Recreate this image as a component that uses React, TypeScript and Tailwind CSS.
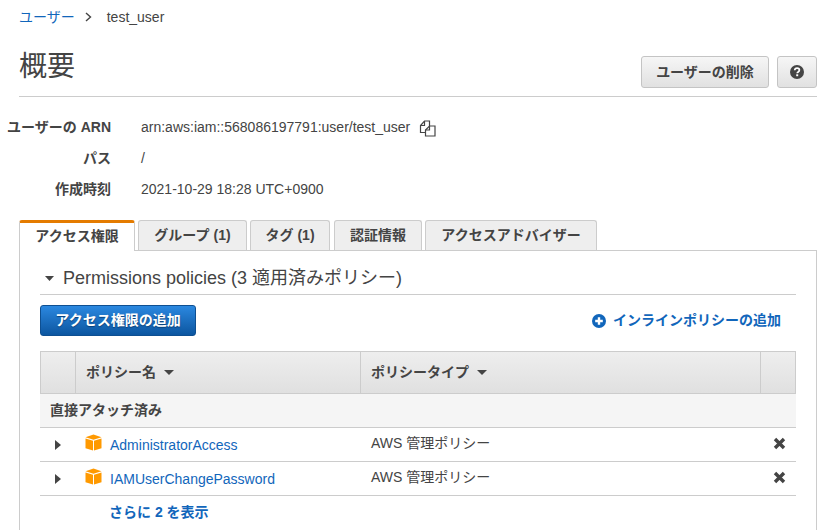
import React from "react";

const Caret = () => (
  <svg width="10" height="5" viewBox="0 0 10 5" className="inline-block"><path d="M0 0h10L5 5z" fill="#444" /></svg>
);

const Cube = () => (
  <svg width="17" height="17" viewBox="0 0 17 17" className="shrink-0">
    <path d="M8.5 0.5 16.5 3.2 8.5 5.8 0.5 3.2z" fill="#ff9900" />
    <path d="M0.5 4.4 8 6.8V16.5L0.5 14.2z" fill="#ff9900" />
    <path d="M16.5 4.4 9 6.8V16.5L16.5 14.2z" fill="#ff9900" />
  </svg>
);

const Row = ({ name }: { name: string }) => (
  <div className="flex h-[34px] items-center border-b border-[#cccccc] text-[14px]">
    <div className="flex w-[35px] shrink-0 justify-center pl-[1px]">
      <svg width="6" height="10" viewBox="0 0 6 10"><path d="M0 0l6 5-6 5z" fill="#444" /></svg>
    </div>
    <div className="flex w-[285px] shrink-0 items-center pl-[10px]">
      <span className="mt-[-5px]"><Cube /></span>
      <a className="ml-[8px] mt-[1px] text-[#1166bb]">{name}</a>
    </div>
    <div className="flex-1 pl-[11px] pb-[2px] text-[#444444]">AWS 管理ポリシー</div>
    <div className="flex w-[36px] shrink-0 justify-center pb-[2px] pl-[3px]">
      <svg width="13" height="13" viewBox="0 0 13 13"><path d="M2 2l9 9M11 2l-9 9" stroke="#444" strokeWidth="3.4" /></svg>
    </div>
  </div>
);

const Tab = ({ label, count, w }: { label: string; count?: string; w: string }) => (
  <div className={`flex h-[30px] items-center justify-center rounded-t-[3px] border border-b-0 border-[#cccccc] bg-[#eeeeee] pb-[1px] text-[14px] font-bold text-[#444444] ${w}`}>
    {label}{count && <span className="ml-[4px]">{count}</span>}
  </div>
);

export default function App() {
  return (
    <div className="h-[530px] w-[833px] overflow-hidden bg-white pl-[19px] pr-[16px] text-[14px] text-[#444444]" style={{ fontFamily: '"Liberation Sans", "Noto Sans CJK JP", sans-serif' }}>
      <div className="flex h-[34px] items-center pb-[1px] leading-none">
        <a className="text-[#1166bb]">ユーザー</a>
        <svg width="7" height="10" viewBox="0 0 7 10" className="ml-[10px] mr-[15px]"><path d="M1 1l4.5 4L1 9" fill="none" stroke="#444" strokeWidth="1.4" /></svg>
        <span>test_user</span>
      </div>

      <div className="flex h-[63px] justify-between border-b border-[#cccccc]">
        <h1 className="mt-[12px] text-[28px] leading-[42px] font-normal text-[#444444]">概要</h1>
        <div className="mt-[22px] flex gap-[8px]">
          <button className="flex h-[32px] w-[128px] items-center justify-center rounded-[3px] border border-[#c4c4c4] bg-gradient-to-b from-[#f6f6f6] to-[#e1e1e1] text-[14px] font-bold text-[#444444]">ユーザーの削除</button>
          <button className="flex h-[32px] w-[40px] items-center justify-center rounded-[3px] border border-[#c4c4c4] bg-gradient-to-b from-[#f6f6f6] to-[#e1e1e1]">
            <svg width="14" height="14" viewBox="0 0 14 14">
              <circle cx="7" cy="7" r="7" fill="#444" />
              <path d="M4.7 5.3C4.8 3.9 5.8 3.2 7.1 3.2c1.3 0 2.3.8 2.3 1.9 0 1.9-2.2 1.7-2.2 3.1" fill="none" stroke="#fff" strokeWidth="1.7" />
              <rect x="6.2" y="9.3" width="2" height="1.9" fill="#fff" />
            </svg>
          </button>
        </div>
      </div>

      <div className="ml-[-19px] mt-[20px] grid grid-cols-[111px_1fr] gap-x-[30px] gap-y-[10px] leading-[21px]">
        <div className="text-right font-bold">ユーザーの ARN</div>
        <div className="flex items-center">
          <span>arn:aws:iam::568086197791:user/test_user</span>
          <svg width="17" height="17" viewBox="0 0 17 17" className="ml-[9px] mt-[1px]" fill="none" stroke="#444" strokeWidth="1.2">
            <path d="M6.5 12.5H1.5V5.5L5.5 1H10.5V6" />
            <path d="M1.5 5.5H5.5V1" />
            <path d="M10.5 6H16V16H6.5V10L10.5 6z" fill="#fff" />
            <path d="M6.5 10H10.5V6" />
          </svg>
        </div>
        <div className="text-right font-bold">パス</div>
        <div>/</div>
        <div className="text-right font-bold">作成時刻</div>
        <div>2021-10-29 18:28 UTC+0900</div>
      </div>

      <div className="mt-[20px] flex gap-[3px]">
        <div className="z-10 mb-[-1px] flex h-[31px] w-[116px] items-center justify-center rounded-t-[3px] border-x border-t-[3px] border-x-[#cccccc] border-t-[#e47b00] bg-white pb-[2px] font-bold">アクセス権限</div>
        <Tab label="グループ" count="(1)" w="w-[109px]" />
        <Tab label="タグ" count="(1)" w="w-[80px]" />
        <Tab label="認証情報" w="ml-[1px] w-[88px]" />
        <Tab label="アクセスアドバイザー" w="w-[172px]" />
      </div>

      <div className="h-[300px] border border-[#cccccc] px-[20px]">
        <div className="flex h-[44px] items-center border-b border-[#cccccc] pl-[5px] pt-[10px]">
          <svg width="9" height="5" viewBox="0 0 9 5" className="mt-[2px]"><path d="M0 0h9L4.5 5z" fill="#444" /></svg>
          <span className="ml-[9px] text-[18px] leading-none">Permissions policies (3 適用済みポリシー)</span>
        </div>

        <div className="mt-[10px] flex items-center justify-between pr-[15px]">
          <button className="flex h-[31px] w-[156px] items-center justify-center rounded-[3px] border border-[#0e4f91] bg-gradient-to-b from-[#2b88e0] to-[#0c56a0] text-[14px] font-bold text-white [text-shadow:0_1px_1px_#0a3f78]">アクセス権限の追加</button>
          <a className="flex items-center font-bold text-[#1166bb]">
            <svg width="14" height="14" viewBox="0 0 14 14" className="mr-[7px]">
              <circle cx="7" cy="7" r="7" fill="#1166bb" />
              <path d="M3.2 7h7.6M7 3.2v7.6" stroke="#fff" strokeWidth="2.4" />
            </svg>
            インラインポリシーの追加
          </a>
        </div>

        <div className="mt-[15px]">
          <div className="flex h-[43px] border border-[#cccccc] bg-gradient-to-b from-[#eeeeee] to-[#e0e0e0] font-bold">
            <div className="w-[35px] shrink-0 border-r border-[#cccccc]" />
            <div className="flex w-[285px] shrink-0 items-center gap-[8px] border-r border-[#cccccc] pl-[10px]">ポリシー名 <Caret /></div>
            <div className="flex flex-1 items-center gap-[8px] border-r border-[#cccccc] pl-[10px]">ポリシータイプ <Caret /></div>
            <div className="w-[34px] shrink-0" />
          </div>
          <div className="flex h-[34px] items-center border-b border-[#cccccc] bg-[#f5f5f5] pl-[10px] font-bold">直接アタッチ済み</div>
          <Row name="AdministratorAccess" />
          <Row name="IAMUserChangePassword" />
          <div className="flex h-[33px] items-center pb-[1px] pl-[69px] font-bold text-[#1166bb]">さらに 2 を表示</div>
        </div>
      </div>
    </div>
  );
}
